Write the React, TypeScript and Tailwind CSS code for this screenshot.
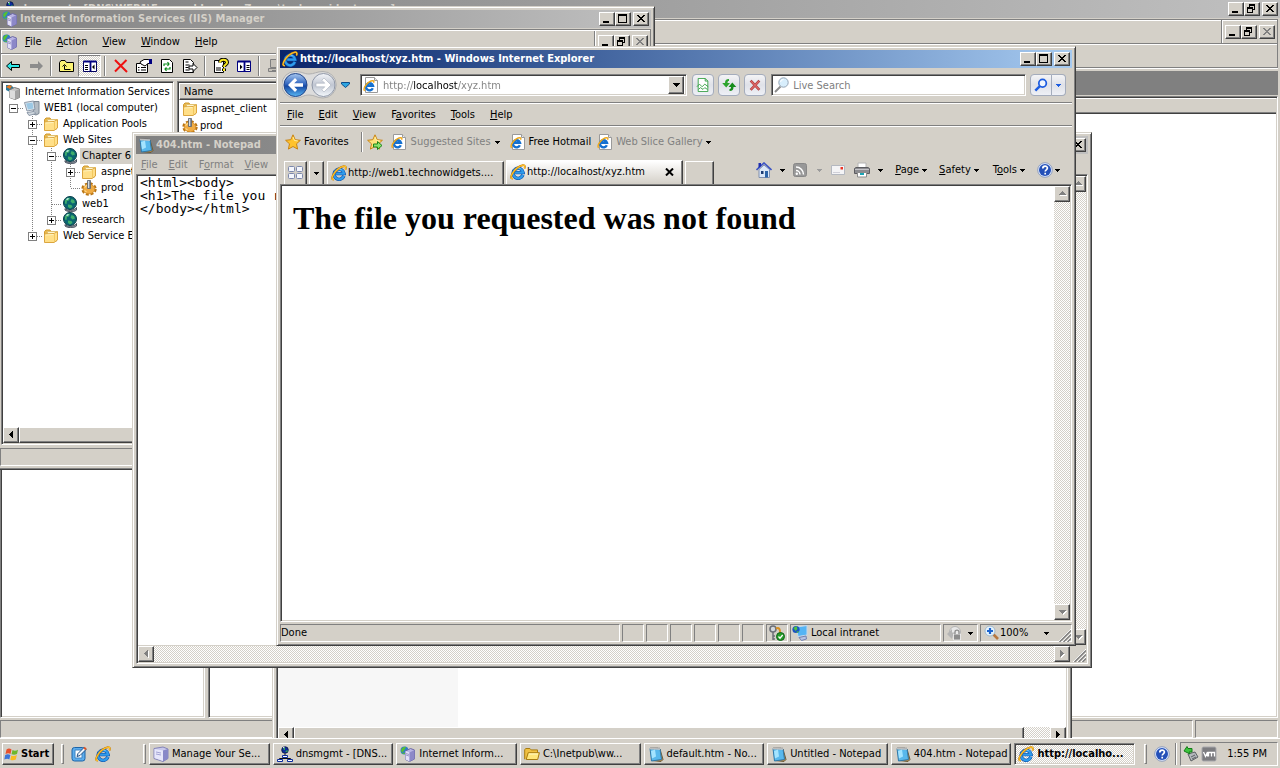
import React, { useState } from 'react';
import clsx from 'clsx';

const raised =
  'border border-t-white border-l-white border-r-[#404040] border-b-[#404040] shadow-[inset_-1px_-1px_0_#808080] bg-[#d4d0c8]';
const sunken = 'border border-t-[#808080] border-l-[#808080] border-r-white border-b-white';
const deep =
  'border border-t-[#808080] border-l-[#808080] border-r-white border-b-white shadow-[inset_1px_1px_0_#404040,inset_-1px_-1px_0_#d4d0c8]';
const band = 'border border-[#808080] shadow-[inset_1px_1px_0_#fff,0_1px_0_#fff]';
const dither = 'bg-[repeating-conic-gradient(#fff_0_25%,#d4d0c8_0_50%)] bg-[length:2px_2px]';
const mnemonic = 'underline decoration-1 underline-offset-1';

type IconProps = { children: React.ReactNode; size?: number };

function Icon({ children, size = 16 }: IconProps) {
  return (
    <svg width={size} height={size} viewBox="0 0 16 16" fill="none" className="shrink-0" aria-hidden="true">
      {children}
    </svg>
  );
}

/* ---------- icons ---------- */

function IeLogo({ size = 16 }: { size?: number }) {
  return (
    <Icon size={size}>
      <path d="M12.9 10.9A5 5 0 1 1 13.1 8.6H5.2" stroke="#0d4fa8" strokeWidth="3.4" />
      <path d="M12.9 10.9A5 5 0 1 1 13.1 8.6H5.2" stroke="#2f9cec" strokeWidth="2.2" />
      <path d="M4.2 6.5A4.6 4.6 0 0 1 10.5 4.4" stroke="#8fd4ff" strokeWidth="1" />
      <path d="M2.8 14.6C.6 14.9.4 12.6 2.6 9.2 5 5.4 9.6 1.8 12.8 1.2c2.4-.4 2.4 1.6 1.6 3.3" stroke="#c67c08" strokeWidth="1.9" />
      <path d="M2.8 14.6C.6 14.9.4 12.6 2.6 9.2 5 5.4 9.6 1.8 12.8 1.2c2.4-.4 2.4 1.6 1.6 3.3" stroke="#ffc62c" strokeWidth="1.1" />
    </Icon>
  );
}

function IePage() {
  return (
    <Icon>
      <path d="M2.5.5h9l3 3v12h-12z" fill="#fff" stroke="#9a9a9a" />
      <path d="M11.5.5v3h3" stroke="#9a9a9a" fill="#e8e8e8" />
      <path d="M9.8 11.2A3.6 3.6 0 1 1 10 8.8H4.2" stroke="#1470d0" strokeWidth="2.4" />
      <path d="M1.8 13.6C.4 13.2 1 10.6 3 8 5 5.4 8.200 3.600 10 3.700c1 .2 1 1 .6 2" stroke="#f0a818" strokeWidth="1.400" />
    </Icon>
  );
}

function FolderIcon() {
  return (
    <Icon>
      <path d="M1.500 13V3.500L3 2h4l1 1.500h5.500V13z" fill="#e8b84c" stroke="#d09a30" />
      <path d="M4.500 3.500h9v8h-9z" fill="#fff6d0" stroke="#e0c070" />
      <path d="M1.500 14.500V6l9.500-.5L14.500 3.500v8.500L11 14.500z" fill="#ffdf88" stroke="#dba640" />
      <path d="M11.500 5.500v8.500" stroke="#f2c860" />
      <path d="M2.500 7l8-.5" stroke="#fff4c0" />
    </Icon>
  );
}

function OpenFolderIcon() {
  return (
    <Icon>
      <path d="M.7 13.3V3.8l1-1.3h4.2l1.3 1.4h6.3v3" fill="#f0c040" stroke="#a87c10" />
      <path d="M2.2 13.5l2-6.8h11.2l-1.7 6.8z" fill="#ffe67a" stroke="#a87c10" />
      <path d="M5 8h9" stroke="#fff8c8" />
    </Icon>
  );
}

function GearIcon() {
  return (
    <Icon>
      <ellipse cx="8" cy="9" rx="6.300" ry="5.300" stroke="#b87414" strokeWidth="2.800" strokeDasharray="2.800 1.760" />
      <ellipse cx="8" cy="9" rx="5.800" ry="4.800" fill="#f0ac44" stroke="#d08c24" strokeWidth=".8" />
      <path d="M3.500 7.500l2.500-2.500M3.500 10.500l2 1.500" stroke="#ffd884" strokeWidth="1.200" />
      <path d="M6.500.500h3v8h-3z" fill="#8a929c" stroke="#5c6470" strokeWidth=".8" />
      <path d="M7.500 1v7" stroke="#d4dce4" />
    </Icon>
  );
}

function GlobeIcon() {
  return (
    <Icon>
      <path d="M3 12.500c2 2.500 9 2.500 11.500-1v2.500c-3 2.500-9 2-11.500 0z" fill="#8c94a0" stroke="#4c5460" />
      <circle cx="8" cy="7" r="6.500" fill="#0b6670" stroke="#063c48" />
      <path d="M3 4.500c1.500-2.500 4-3 5-2.500l-1 2.500-2 .5-.5 3-1.500-.5zM9.500 3l2.500 1 1 2.500-2.500 1-2-2zM6 8.500l3.500.5 1 2-2.500 1.500-2-1.500z" fill="#3fae6c" />
      <path d="M4.500 3.500l2-1" stroke="#d6fbff" strokeWidth="1.300" />
    </Icon>
  );
}

function IisIcon() {
  return (
    <Icon>
      <circle cx="4.500" cy="4.500" r="4" fill="#2f7cc8" />
      <path d="M1 4c1-3 4-3.500 5-3L4 4.500 2 7zM1.500 7.500l3-1 1 1.500z" fill="#58c030" />
      <path d="M5.500 5l5-2.500 4 1.500v9l-5 2.500-4-2z" fill="#b8b4e4" stroke="#6c68a4" />
      <path d="M5.500 5l4 1.500v9l-4-2z" fill="#e2e0f8" />
      <path d="M9.500 6.500l5-2.500v9l-5 2.500z" fill="#8c88c8" />
      <path d="M6 7.500l3 1M6 9l3 1" stroke="#7c78b0" strokeWidth=".7" />
    </Icon>
  );
}

function IisRootIcon() {
  return (
    <Icon>
      <path d="M1 1h5l3 3-4 4-4-2z" fill="#2a7a9c" />
      <path d="M1 3l3-2 3 1-2 3zM3 6l3-1" fill="#e87820" />
      <path d="M4.500 6l5-2.500 5 1.500v8.500l-4.500 2-5.500-2z" fill="#c4c4c4" stroke="#7c7c7c" />
      <path d="M10 7l4.500-2v8.500L10 15.500z" fill="#a2a2a2" />
      <path d="M4.500 6L10 7v8.500l-5.500-2z" fill="#dcdcdc" />
    </Icon>
  );
}

function ComputerIcon() {
  return (
    <Icon>
      <path d="M10 1.500h5v12l-3 1.500-3-1z" fill="#b4bcc4" stroke="#7c8894" />
      <path d="M.500 2.500l9-1.500 1.500 8.500-8 1.500z" fill="#dfe7ee" stroke="#8c98a8" />
      <path d="M2 3.500l6.500-1 1 6-5.500 1z" fill="#9cc8e4" />
      <path d="M3 12.500l7-1 2 2-7 2z" fill="#d0d8de" stroke="#8c98a8" />
    </Icon>
  );
}

function ServerIcon() {
  return (
    <Icon>
      <path d="M1 2.500l9-1.500 5 2v9.500l-5 3-9-3z" fill="#c8c8ec" stroke="#8484b8" />
      <path d="M10 4.500l5-1.500v9.500l-5 3z" fill="#8888c8" />
      <path d="M1.500 3l8.500 1.500v10.500l-8.500-3z" fill="#e6e6fa" />
      <path d="M3 6l5 1M3 8l5 1" stroke="#a4a4d4" />
    </Icon>
  );
}

function NotepadIcon() {
  return (
    <Icon>
      <path d="M12 3l3 10.500-2 2-9-1z" fill="#b88848" stroke="#6c5c38" />
      <path d="M2 2.500l10 .5 1.500 10.500-10 1.500z" fill="#58b8ec" stroke="#3078a8" />
      <path d="M3 5l4-1.500 1 7-4 2z" fill="#a4e4ff" />
      <path d="M2 2.500l10 .5" stroke="#f4f4f4" strokeWidth="1.600" />
      <path d="M3 1v2.500M5 1v2.500M7 1v2.500M9 1v2.500M11 1.500V3.500" stroke="#6c6c6c" strokeWidth=".8" />
    </Icon>
  );
}

function DnsIcon() {
  return (
    <Icon>
      <circle cx="8" cy="4" r="3.300" fill="#0c2c9c" stroke="#061440" strokeWidth=".8" />
      <path d="M6 3l2-1.500L8 4zM8 5.500L10.500 4v2z" fill="#38c048" />
      <path d="M6 1.800l1.500-.6" stroke="#e8f4ff" />
      <path d="M8 7.500v2M2.500 13.500v-1h11v1" stroke="#101010" />
      <path d="M5.500 9.500h5v2h-5z" fill="#fff" stroke="#0c2c9c" />
      <path d="M.500 13.500h5v2h-5zM10.500 13.500h5v2h-5z" fill="#fff" stroke="#0c2c9c" />
    </Icon>
  );
}

function StarIcon({ add = false }: { add?: boolean }) {
  return (
    <Icon>
      <path d="M8 .800l2.200 4.900 5.200.6-3.900 3.500 1.100 5.300L8 12.500l-4.600 2.600 1.100-5.300L.600 6.300l5.200-.6z" fill={add ? '#ffe27c' : '#ffc32e'} stroke="#c98414" />
      <path d="M8 3l1.400 3.500 3.400.4" stroke="#fff0a0" />
      {add && <path d="M6.500 10h4V7.500l4.500 4-4.500 4V13h-4z" fill="#8ce46c" stroke="#1d8418" />}
    </Icon>
  );
}

function HelpIcon() {
  return (
    <Icon>
      <circle cx="8" cy="8" r="7.300" fill="#dce8ff" stroke="#8090b4" strokeWidth=".8" />
      <circle cx="8" cy="8" r="6" fill="#2450b8" />
      <path d="M5.800 6.400c0-3 4.600-3 4.600-.3 0 1.700-2.200 1.700-2.200 3.400M8.200 10.800v1.600" stroke="#fff" strokeWidth="1.700" />
    </Icon>
  );
}

function Caret({ color = '#000' }: { color?: string }) {
  return (
    <svg width="5" height="3" viewBox="0 0 5 3" className="shrink-0" shapeRendering="crispEdges" aria-hidden="true">
      <path d="M0 0h5v1H4v1H3v1H2V2H1V1H0z" fill={color} />
    </svg>
  );
}

/* ---------- window chrome ---------- */

type Glyph = 'min' | 'max' | 'restore' | 'close';

function CaptionButton({ kind, disabled = false }: { kind: Glyph; disabled?: boolean }) {
  const color = disabled ? '#808080' : '#000';
  return (
    <button type="button" aria-label={kind} disabled={disabled} className={clsx('h-3.5 w-4 shrink-0', raised)}>
      <svg width="14" height="12" viewBox="0 0 14 12" shapeRendering="crispEdges" fill="none" aria-hidden="true">
        {kind === 'min' && <path d="M3 8h6v2H3z" fill={color} />}
        {kind === 'max' && <path d="M2 1h9v9H2zM3 3v6h7V3z" fill={color} fillRule="evenodd" />}
        {kind === 'restore' && (
          <path d="M4 1h6v6H8V6h1V3H5v1H4zM2 4h6v6H2zM3 6v3h4V6z" fill={color} fillRule="evenodd" />
        )}
        {kind === 'close' && (
          <path
            d="M3 2h2v1h1v1h2V3h1V2h2v1h-1v1H9v1H8v1h1v1h1v1h1v1H9V8H8V7H6v1H5v1H3V8h1V7h1V6h1V5H5V4H4V3H3z"
            fill={color}
          />
        )}
      </svg>
    </button>
  );
}

function CaptionButtons({ middle = 'max', closeOff = false }: { middle?: Glyph; closeOff?: boolean }) {
  return (
    <div className="ml-auto flex items-center pr-0.5">
      <CaptionButton kind="min" />
      <CaptionButton kind={middle} />
      <div className="w-0.5" />
      <CaptionButton kind="close" disabled={closeOff} />
    </div>
  );
}

type TitleProps = { icon: React.ReactNode; title: string; active?: boolean; middle?: Glyph };

function TitleBar({ icon, title, active = false, middle }: TitleProps) {
  return (
    <div
      className={clsx(
        'flex h-[18px] shrink-0 items-center bg-linear-to-r pl-0.5 font-bold',
        active ? 'from-[#0a246a] to-[#a6caf0] text-white' : 'from-[#808080] to-[#c0c0c0] text-[#d4d0c8]'
      )}
    >
      {icon}
      <span className="ml-0.5 whitespace-nowrap">{title}</span>
      <CaptionButtons middle={middle} />
    </div>
  );
}

function MenuItem({ label, at = 0 }: { label: string; at?: number }) {
  return (
    <button type="button" className="leading-4 whitespace-nowrap">
      {label.slice(0, at)}
      <span className={mnemonic}>{label[at]}</span>
      {label.slice(at + 1)}
    </button>
  );
}

function Window({ className, children }: { className: string; children: React.ReactNode }) {
  return (
    <section
      className={clsx(
        'absolute flex flex-col border border-t-[#d4d0c8] border-r-[#404040] border-b-[#404040] border-l-[#d4d0c8] bg-[#d4d0c8] p-[3px] shadow-[inset_1px_1px_0_#fff,inset_-1px_-1px_0_#808080]',
        className
      )}
    >
      {children}
    </section>
  );
}

const arrows = {
  up: 'M4 8h7v-1h-1v-1h-1v-1h-1v-1h-1v1h-1v1h-1v1h-1z',
  down: 'M4 5h7v1h-1v1h-1v1h-1v1h-1v-1h-1v-1h-1v-1h-1z',
  left: 'M8 3h1v7h-1v-1h-1v-1h-1v-1h-1v-1h1v-1h1v-1h1z',
  right: 'M5 3h1v1h1v1h1v1h1v1h-1v1h-1v1h-1v1h-1z',
};

function ScrollButton({ dir, enabled = false }: { dir: keyof typeof arrows; enabled?: boolean }) {
  return (
    <button type="button" aria-label={`Scroll ${dir}`} disabled={!enabled} className={clsx('size-4 shrink-0', raised)}>
      <svg width="14" height="14" viewBox="0 0 14 14" shapeRendering="crispEdges" aria-hidden="true">
        {!enabled && <path d={arrows[dir]} fill="#fff" transform="translate(1 1)" />}
        <path d={arrows[dir]} fill={enabled ? '#000' : '#808080'} />
      </svg>
    </button>
  );
}

function VScroll() {
  return (
    <div className={clsx('flex w-4 shrink-0 flex-col justify-between', dither)}>
      <ScrollButton dir="up" />
      <ScrollButton dir="down" />
    </div>
  );
}

function HScroll({ thumb }: { thumb?: string }) {
  return (
    <div className={clsx('flex h-4 shrink-0 justify-between', dither)}>
      <ScrollButton dir="left" enabled={!!thumb} />
      {thumb && <div className={clsx(raised, thumb)} />}
      <ScrollButton dir="right" enabled={!!thumb} />
    </div>
  );
}

function Grip() {
  return (
    <svg width="13" height="13" viewBox="0 0 13 13" className="shrink-0 self-end" aria-hidden="true">
      <path d="M0 13L13 0M4 13l9-9M8 13l5-5" stroke="#fff" />
      <path d="M1.500 13L13 1.500M5.500 13L13 5.500M9.500 13L13 9.500" stroke="#808080" strokeWidth="1.500" />
    </svg>
  );
}

/* ---------- DNS console, maximised at the back ---------- */

function DnsWindow() {
  return (
    <section className="absolute inset-0 flex flex-col bg-[#d4d0c8]">
      <TitleBar
        icon={<DnsIcon />}
        title="dnsmgmt - [DNS\WEB1\Forward Lookup Zones\technowidgets.com]"
        middle="restore"
      />
      <div className="flex min-h-0 flex-1 flex-col pr-0.5">
        <div className={clsx('mt-px flex h-[25px] shrink-0 items-center', band)}>
          <div className="ml-auto flex h-full items-center border-l border-[#808080] pl-[3px] shadow-[inset_1px_0_0_#fff]">
            <CaptionButtons middle="restore" closeOff />
          </div>
        </div>
        <div className={clsx('h-6 shrink-0 border-t-0', band)} />
        <div className="mt-[3px] flex min-h-0 flex-1 gap-[3px]">
          <div className={clsx('w-[205px] shrink-0 bg-white', deep)} />
          <div className="flex min-w-0 flex-1 flex-col">
            <div className="h-6 shrink-0 bg-[#808080]" />
            <div className={clsx('mt-px flex min-h-0 flex-1 flex-col bg-white p-px', deep)}>
              <div className="h-4 shrink-0 border-b border-[#404040] bg-[#d4d0c8] shadow-[inset_0_1px_0_#fff,inset_0_-1px_0_#808080]" />
            </div>
          </div>
        </div>
        <div className="mt-0.5 flex h-[18px] shrink-0 gap-0.5">
          <div className={clsx('flex-1', sunken)} />
          <div className={clsx('w-[83px]', sunken)} />
        </div>
      </div>
    </section>
  );
}

/* ---------- IIS manager ---------- */

type Node = {
  label: string;
  icon: React.ReactNode;
  guides: boolean[];
  box?: '+' | '-';
  up?: boolean;
  down?: boolean;
  selected?: boolean;
};

const nodes: Node[] = [
  { label: 'WEB1 (local computer)', icon: <ComputerIcon />, guides: [], box: '-' },
  { label: 'Application Pools', icon: <FolderIcon />, guides: [false], box: '+', up: true, down: true },
  { label: 'Web Sites', icon: <FolderIcon />, guides: [false], box: '-', up: true, down: true },
  { label: 'Chapter 6', icon: <GlobeIcon />, guides: [false, true], box: '-', up: true, down: true, selected: true },
  { label: 'aspnet_client', icon: <FolderIcon />, guides: [false, true, true], box: '+', up: true, down: true },
  { label: 'prod', icon: <GearIcon />, guides: [false, true, true], up: true },
  { label: 'web1', icon: <GlobeIcon />, guides: [false, true], up: true, down: true },
  { label: 'research', icon: <GlobeIcon />, guides: [false, true], box: '+', up: true },
  { label: 'Web Service Extensions', icon: <FolderIcon />, guides: [false], box: '+', up: true },
];

function TreeCell({ line, box, up, down, branch }: { line?: boolean; box?: string; up?: boolean; down?: boolean; branch?: boolean }) {
  return (
    <svg width="19" height="16" viewBox="0 0 19 16" shapeRendering="crispEdges" className="shrink-0" aria-hidden="true">
      <g stroke="#808080" strokeDasharray="1 1">
        {(line || up) && <path d="M8.500 0v8" />}
        {(line || down) && <path d="M8.500 8v8" />}
        {branch && <path d="M9 8.500h10" />}
      </g>
      {box && (
        <>
          <path d="M4.500 4.500h8v8h-8z" fill="#fff" stroke="#808080" />
          <path d={box === '+' ? 'M6 8.500h5M8.500 6v5' : 'M6 8.500h5'} stroke="#000" />
        </>
      )}
    </svg>
  );
}

function TreeView() {
  return (
    <ul className="flex-1 overflow-hidden pt-px">
      <li className="flex h-4 items-center pl-0.5 whitespace-nowrap">
        <IisRootIcon />
        <span className="ml-1">Internet Information Services</span>
      </li>
      {nodes.map((n) => (
        <li key={n.label} className="flex h-4 items-center pl-0.5 whitespace-nowrap">
          {n.guides.map((g, i) => (
            <TreeCell key={i} line={g} />
          ))}
          <TreeCell box={n.box} up={n.up} down={n.down} branch />
          {n.icon}
          <span className={clsx('ml-0.5 px-0.5', n.selected && 'bg-[#d4d0c8]')}>{n.label}</span>
        </li>
      ))}
    </ul>
  );
}

function Sep() {
  return <div className="mx-[3px] h-5 w-0.5 shrink-0 border-l border-[#808080] bg-white" />;
}

function IisToolbar() {
  const btn = 'flex h-[22px] w-[23px] shrink-0 items-center justify-center';
  return (
    <div className={clsx('flex h-6 shrink-0 items-center overflow-hidden border-t-0', band)}>
      <button type="button" aria-label="Back" className={btn}>
        <Icon><path d="M1.500 8l5-4.500V6.500h8v3h-8v3z" fill="#2ce8e8" stroke="#000" /></Icon>
      </button>
      <button type="button" aria-label="Forward" className={btn}>
        <Icon><path d="M15 8l-5-5v3H2v4h8v3z" fill="#8c8c8c" /></Icon>
      </button>
      <Sep />
      <button type="button" aria-label="Up" className={btn}>
        <Icon>
          <path d="M.500 13.500v-9l1.500-2h4l1.500 2h7v9z" fill="#fcf474" stroke="#000" />
          <path d="M5.500 11.500h6M5.500 11.500v-4M3.500 8.500l2-2 2 2" stroke="#000" />
        </Icon>
      </button>
      <button type="button" aria-label="Show tree" className={clsx(btn, sunken, dither)}>
        <Icon>
          <path d="M1.500 3.500h13v10h-13z" fill="#fff" stroke="#000060" />
          <path d="M1.500 3.500h13M8.500 4v9" stroke="#000080" strokeWidth="1.800" />
          <path d="M3 7.500h3M3 9.500h3M3 11.500h3" stroke="#000" />
          <path d="M12.500 6.500v5L10 9z" fill="#000" />
        </Icon>
      </button>
      <Sep />
      <button type="button" aria-label="Delete" className={btn}>
        <Icon><path d="M2 2l12 12M13.500 2L2 13.500" stroke="#ee1010" strokeWidth="2" /></Icon>
      </button>
      <button type="button" aria-label="Properties" className={btn}>
        <Icon>
          <path d="M.500 5.500h11v9H.500z" fill="#fff" stroke="#000" />
          <path d="M2 9.500h1.500M5 9.500h5M2 12h1.500M5 12h5" stroke="#000" />
          <path d="M4 4l4-2.500h4l3.500 1v3L12 5.500 9 8 5 6z" fill="#fff" stroke="#000" />
          <path d="M13 1h3v5h-3z" fill="#000080" />
        </Icon>
      </button>
      <button type="button" aria-label="Refresh" className={btn}>
        <Icon>
          <path d="M2.500 1.500h8l3 3v10h-11z" fill="#fff" stroke="#000" />
          <path d="M5 8V6h5M8.500 4L10 6 8.500 8M11 9v2H6M7.500 9.500L6 11l1.500 2" stroke="#0c8c1c" strokeWidth="1.200" />
        </Icon>
      </button>
      <button type="button" aria-label="Export list" className={btn}>
        <Icon>
          <path d="M1.500 1.500h7l3 3v10h-10z" fill="#fff" stroke="#000" />
          <path d="M3.500 4h3M3.500 7h4M3.500 9.500h3M3.500 12h4" stroke="#000" />
          <path d="M7 8h4V5.500l4 4-4 4V11H7z" fill="#fff" stroke="#000" />
        </Icon>
      </button>
      <Sep />
      <button type="button" aria-label="Help" className={btn}>
        <Icon>
          <path d="M1.500 2.500h9v12h-9z" fill="#fff" stroke="#000" />
          <path d="M3 10h5M3 12h5" stroke="#000" />
          <path d="M7 4.500c0-4 7-3.500 7 0 0 2-3 2-3 4.500M11 10.500v2.500" stroke="#000" strokeWidth="4" />
          <path d="M7 4.500c0-4 7-3.500 7 0 0 2-3 2-3 4.500M11 10.500v2.500" stroke="#f8e820" strokeWidth="2" />
        </Icon>
      </button>
      <button type="button" aria-label="Action pane" className={btn}>
        <Icon>
          <path d="M1.500 3.500h13v10h-13z" fill="#fff" stroke="#000080" />
          <path d="M1.500 3.500h13M8.500 4v9" stroke="#000080" strokeWidth="1.800" />
          <path d="M4 6.500v5L6.500 9z" fill="#000" />
          <path d="M10.500 7.500h3M10.500 9.500h3M10.500 11.500h3" stroke="#000" />
        </Icon>
      </button>
      <Sep />
      <button type="button" aria-label="Connect" className={btn}>
        <Icon>
          <path d="M3.500 1.500h10v8h-10zM5 12.500h8M1.500 10.500h12v3h-12z" stroke="#808080" fill="#c4c0b8" />
        </Icon>
      </button>
    </div>
  );
}

function IisWindow() {
  return (
    <Window className="top-1.5 -left-1 h-[464px] w-[659px]">
      <TitleBar icon={<IisIcon />} title="Internet Information Services (IIS) Manager" />
      <div className={clsx('mt-px flex h-[25px] shrink-0 items-center pt-px pl-px', band)}>
        <IisIcon />
        <nav className="flex gap-[15px] pl-[7px]">
          <MenuItem label="File" />
          <MenuItem label="Action" />
          <MenuItem label="View" />
          <MenuItem label="Window" />
          <MenuItem label="Help" />
        </nav>
        <div className="ml-auto flex h-full items-center border-l border-[#808080] pl-[3px] shadow-[inset_1px_0_0_#fff]">
          <CaptionButtons middle="restore" closeOff />
        </div>
      </div>
      <IisToolbar />
      <div className="mt-[3px] flex min-h-0 flex-1 gap-[3px] pl-px">
        <div className={clsx('flex w-[173px] shrink-0 flex-col bg-white p-px', deep)}>
          <TreeView />
          <HScroll thumb="flex-1" />
        </div>
        <div className={clsx('flex min-w-0 flex-1 flex-col bg-white p-px', deep)}>
          <div className={clsx('flex h-[17px] shrink-0 items-center px-1 pt-px', raised)}>Name</div>
          <ul className="px-[3px]">
            <li className="flex h-[17px] items-center gap-[3px] pt-px">
              <FolderIcon />
              aspnet_client
            </li>
            <li className="flex h-[17px] items-center gap-0.5">
              <GearIcon />
              prod
            </li>
          </ul>
        </div>
      </div>
      <div className={clsx('mt-[3px] h-[18px] shrink-0', sunken)} />
    </Window>
  );
}

/* ---------- Notepad ---------- */

function NotepadWindow() {
  return (
    <Window className="top-[132px] left-[132px] h-[536px] w-[960px]">
      <TitleBar icon={<NotepadIcon />} title="404.htm - Notepad" />
      <nav className="flex h-5 shrink-0 items-center gap-[11px] pt-px pl-[5px] text-[#808080]">
        <MenuItem label="File" />
        <MenuItem label="Edit" />
        <MenuItem label="Format" at={1} />
        <MenuItem label="View" />
        <MenuItem label="Help" />
      </nav>
      <div className={clsx('flex min-h-0 flex-1 flex-col bg-[#d4d0c8] p-px', deep)}>
        <div className="flex min-h-0 flex-1">
          <textarea
            aria-label="Text"
            wrap="off"
            spellCheck={false}
            defaultValue={'<html><body>\n<h1>The file you requested was not found</h1>\n</body></html>'}
            className="min-w-0 flex-1 resize-none overflow-hidden bg-white px-0.5 font-['DejaVu_Sans_Mono','Liberation_Mono',monospace] text-[13px] leading-[13px] outline-none"
          />
          <VScroll />
        </div>
        <div className="flex h-[17px] shrink-0 pt-px">
          <div className="flex-1">
            <HScroll />
          </div>
          <div className="flex w-4 justify-end">
            <Grip />
          </div>
        </div>
      </div>
    </Window>
  );
}

/* ---------- second browser window, mostly hidden ---------- */

function BackBrowserWindow() {
  return (
    <Window className="top-[300px] left-[272px] h-[449px] w-[800px]">
      <div className={clsx('flex min-h-0 flex-1 flex-col bg-white p-px', deep)}>
        <div className="flex min-h-0 flex-1">
          <div className="w-[180px] bg-[#f7f7f7]" />
        </div>
        <HScroll thumb="mr-[26px] flex-1" />
      </div>
    </Window>
  );
}

/* ---------- Internet Explorer ---------- */

const glossy = 'flex h-[22px] items-center justify-center border border-[#a4acbc] bg-linear-to-b from-[#f4f4f6] via-[#dfe1e8] to-[#eef0f6]';

function NavRow() {
  const [query, setQuery] = useState('');
  return (
    <div className="flex h-[34px] shrink-0 items-center pr-1.5 pl-0.5">
      <svg width="56" height="30" viewBox="0 0 56 30" className="shrink-0" aria-label="Back and forward" role="img">
        <defs>
          <linearGradient id="back" x1="0" y1="0" x2="0" y2="1">
            <stop offset="0" stopColor="#a8c8f0" />
            <stop offset=".45" stopColor="#3468c0" />
            <stop offset=".55" stopColor="#1548a4" />
            <stop offset="1" stopColor="#58b8f4" />
          </linearGradient>
          <linearGradient id="fwd" x1="0" y1="0" x2="0" y2="1">
            <stop offset="0" stopColor="#f4f6fa" />
            <stop offset=".5" stopColor="#c0c6d2" />
            <stop offset="1" stopColor="#f4f8fc" />
          </linearGradient>
        </defs>
        <path d="M13 1.500C20 1.500 22 4 27 4s8-2.500 14-2.500a13.200 13.200 0 0 1 0 26.500c-6 0-8-3-14-3s-7 3-14 3A13.200 13.200 0 0 1 13 1.500z" fill="#dcdcdc" stroke="#b0b0b0" />
        <circle cx="13.500" cy="15" r="11.500" fill="url(#back)" stroke="#24488c" />
        <circle cx="41.500" cy="15" r="11.500" fill="url(#fwd)" stroke="#9098a8" />
        <path d="M6 15l7-7 2.200 2.200-3 3H21v3.600h-8.800l3 3L13 22z" fill="#fff" />
        <path d="M49 15l-7-7-2.200 2.200 3 3H34v3.600h8.800l-3 3L42 22z" fill="#fff" stroke="#a8b0bc" strokeWidth=".6" />
      </svg>
      <svg width="9" height="6" viewBox="0 0 9 6" className="mr-2.5 ml-[3px] shrink-0" aria-hidden="true">
        <path d="M.500.500h8v1.500L4.500 5.500.500 2z" fill="#2ca4e0" stroke="#0c4c8c" />
      </svg>
      <div className={clsx('flex h-[22px] min-w-0 flex-[328] items-center bg-white p-0.5', deep)}>
        <IePage />
        <input
          aria-label="Address"
          defaultValue="http://localhost/xyz.htm"
          className="ml-1 min-w-0 flex-1 bg-[linear-gradient(90deg,#808080_30px,#000_30px,#000_75px,#808080_75px)] bg-clip-text pt-0.5 text-transparent outline-none"
        />
        <button type="button" aria-label="Show addresses" className={clsx('flex h-[18px] w-4 items-center justify-center', raised)}>
          <svg width="7" height="4" viewBox="0 0 7 4" shapeRendering="crispEdges" aria-hidden="true">
            <path d="M0 0h7v1H6v1H5v1H4v1H3V3H2V2H1V1H0z" fill="#000" />
          </svg>
        </button>
      </div>
      <div className="mr-[5px] ml-[5px] flex gap-1">
        <button type="button" aria-label="Compatibility view" className={clsx('w-[22px] rounded-sm', glossy)}>
          <Icon size={14}>
            <path d="M2.500.500h8l3 3v12h-11z" fill="#fff" stroke="#2c9c3c" />
            <path d="M1 10l3-3 3 3 3-3 4 3M3 13l2-2 3 2 2-2 3 2M10.500.500v3h3" stroke="#2c9c3c" />
          </Icon>
        </button>
        <button type="button" aria-label="Refresh" className={clsx('w-[22px] rounded-sm', glossy)}>
          <Icon>
            <path d="M8 2C5 2 4 3.500 4 6H1.200l4 4.500L9 6H6.500c0-1.500.5-2 1.500-2z" fill="#2ca42c" />
            <path d="M8.500 14c3 0 4-1.500 4-4h2.800l-4-4.500L7.500 10H10c0 1.500-.5 2-1.500 2z" fill="#168c1c" />
          </Icon>
        </button>
        <button type="button" aria-label="Stop" className={clsx('w-[22px] rounded-sm', glossy)}>
          <Icon size={14}>
            <path d="M3 3l10 10.500M13 3L3 13.500" stroke="#b04040" strokeWidth="3" />
            <path d="M3.500 3.500l9 9.500M12.500 3.500l-9 9.500" stroke="#e06868" strokeWidth="1.400" />
          </Icon>
        </button>
      </div>
      <div className={clsx('flex h-[22px] min-w-0 flex-[254] items-center bg-white px-0.5', deep)}>
        <Icon>
          <path d="M1 15l5.500-5.500" stroke="#8c8c8c" strokeWidth="2" />
          <circle cx="9.500" cy="5.500" r="4.700" fill="#d8eefc" stroke="#94a4b4" />
          <path d="M6.500 5a3 3 0 0 1 3-2.500" stroke="#fff" />
        </Icon>
        <input
          aria-label="Live Search"
          placeholder="Live Search"
          value={query}
          onChange={(e) => setQuery(e.target.value)}
          className="ml-[3px] min-w-0 flex-1 pt-0.5 outline-none placeholder:text-[#808080]"
        />
      </div>
      <button type="button" aria-label="Search" className={clsx('ml-1 w-[22px] rounded-l-sm', glossy)}>
        <Icon size={14}>
          <path d="M1.500 14.500L7 9" stroke="#1c5ce0" strokeWidth="2.800" />
          <circle cx="9.800" cy="6" r="4.300" stroke="#1c5ce0" strokeWidth="2" fill="#f0f6ff" />
        </Icon>
      </button>
      <button type="button" aria-label="Search options" className={clsx('w-3.5 rounded-r-sm border-l-0', glossy)}>
        <Caret color="#1c5ce0" />
      </button>
    </div>
  );
}

function FavoritesBar() {
  const link = 'flex items-center whitespace-nowrap';
  return (
    <div className="flex h-8 shrink-0 items-center pb-0.5 pl-[5px]">
      <button type="button" className={clsx(link, 'gap-[3px]')}>
        <StarIcon />
        Favorites
      </button>
      <div className="mr-1 ml-3 h-5 w-0.5 border-l border-[#808080] bg-white" />
      <button type="button" aria-label="Add to favorites">
        <StarIcon add />
      </button>
      <a href="#suggested" className={clsx(link, 'ml-2 gap-1 text-[#808080]')}>
        <IePage />
        Suggested Sites
        <Caret />
      </a>
      <a href="#hotmail" className={clsx(link, 'ml-2.5 gap-[3px]')}>
        <IePage />
        Free Hotmail
      </a>
      <a href="#webslice" className={clsx(link, 'ml-1.5 gap-[3px] text-[#808080]')}>
        <IePage />
        Web Slice Gallery
        <Caret />
      </a>
    </div>
  );
}

function TabRow() {
  const tab = 'flex items-center border border-b-0 border-t-white border-l-white border-r-[#404040] shadow-[inset_-1px_0_0_#808080]';
  const cmd = 'flex items-center whitespace-nowrap';
  return (
    <div className="flex h-[25px] shrink-0 items-end pl-1">
      <button type="button" aria-label="Quick tabs" className={clsx(tab, 'h-[23px] w-[23px] justify-center')}>
        <Icon>
          <g fill="#f4f6fc" stroke="#7c88ac">
            <rect x=".500" y="1.500" width="6" height="5" rx="1" />
            <rect x="8.500" y="1.500" width="6" height="5" rx="1" />
            <rect x=".500" y="8.500" width="6" height="5" rx="1" />
            <rect x="8.500" y="8.500" width="6" height="5" rx="1" />
          </g>
        </Icon>
      </button>
      <button type="button" aria-label="Tab list" className={clsx(tab, 'ml-0.5 h-[23px] w-[15px] justify-center')}>
        <Caret />
      </button>
      <button type="button" className={clsx(tab, 'ml-[3px] h-[23px] w-[177px] gap-px pl-[3px] text-left')}>
        <IeLogo />
        <span className="truncate">http://web1.technowidgets....</span>
      </button>
      <div className={clsx(tab, 'ml-0.5 h-6 w-[177px] bg-linear-to-b from-white to-[#d4d0c8] pr-2 pb-px pl-[3px]')}>
        <button type="button" className="flex items-center gap-px">
          <IeLogo />
          http://localhost/xyz.htm
        </button>
        <button type="button" aria-label="Close tab" className="ml-auto">
          <svg width="9" height="8" viewBox="0 0 9 8" aria-hidden="true">
            <path d="M1 .500l7 7M8 .500l-7 7" stroke="#000" strokeWidth="2" />
          </svg>
        </button>
      </div>
      <button type="button" aria-label="New tab" className={clsx(tab, 'ml-0.5 h-[23px] w-[29px]')} />
      <div className="mb-1.5 ml-auto flex items-center pr-3">
        <button type="button" aria-label="Home" className={clsx(cmd, 'gap-2')}>
          <Icon>
            <path d="M3 7.500L8 3l5.500 4.500v8H3z" fill="#dce8f8" stroke="#8090b0" />
            <path d="M.500 8L8 1l7.500 7" stroke="#3c54c4" strokeWidth="1.600" />
            <path d="M2.500 1h2.500v3L2.500 6z" fill="#1c2cb0" />
            <path d="M9 9h3v6.500H9z" fill="#2c64a8" />
            <path d="M5 9h2.500v3H5z" fill="#1c3c74" />
          </Icon>
          <Caret />
        </button>
        <button type="button" aria-label="Feeds" className={clsx(cmd, 'ml-[7px] gap-[9px]')} disabled>
          <Icon>
            <rect x="1.500" y="1.500" width="13" height="13" rx="2" fill="#989898" stroke="#888" />
            <path d="M4 8.500a4 4 0 0 1 4 4M4 5a7.500 7.500 0 0 1 7.500 7.500" stroke="#fff" strokeWidth="1.500" />
            <circle cx="4.800" cy="11.700" r="1.200" fill="#fff" />
          </Icon>
          <Caret color="#9c9c9c" />
        </button>
        <button type="button" aria-label="Read mail" className="ml-2">
          <Icon>
            <path d="M1.500 3.500h13v9h-13z" fill="#f4f4f6" stroke="#b4b8c0" />
            <path d="M10.500 5h2.500v2.500h-2.500z" fill="#ec3424" />
            <path d="M3 10.500h7" stroke="#d0d0d8" />
          </Icon>
        </button>
        <button type="button" aria-label="Print" className={clsx(cmd, 'ml-2 gap-2')}>
          <Icon>
            <path d="M4 1h8v5H4z" fill="#fff" stroke="#b4b4b4" />
            <path d="M.500 6.500l1.500-1h12l1.500 1v5H.500z" fill="#8c8c90" stroke="#5c5c60" />
            <path d="M1 7.500h14" stroke="#c4c4c8" />
            <path d="M3.500 10.500h9v4.500h-9z" fill="#fff" stroke="#8c8c8c" />
            <path d="M6 11h4v2H6z" fill="#18a4b4" />
          </Icon>
          <Caret />
        </button>
        <button type="button" className={clsx(cmd, 'ml-3 gap-[3px]')}>
          <span><span className={mnemonic}>P</span>age</span>
          <Caret />
        </button>
        <button type="button" className={clsx(cmd, 'ml-3 gap-[3px]')}>
          <span><span className={mnemonic}>S</span>afety</span>
          <Caret />
        </button>
        <button type="button" className={clsx(cmd, 'ml-3.5 gap-[3px]')}>
          <span>T<span className={mnemonic}>o</span>ols</span>
          <Caret />
        </button>
        <button type="button" aria-label="Help" className={clsx(cmd, 'ml-3 gap-0.5')}>
          <HelpIcon />
          <Caret />
        </button>
      </div>
    </div>
  );
}

function Divider() {
  return <div className="h-0.5 shrink-0 border-t border-[#808080] bg-white" />;
}

function StatusBar() {
  const pane = clsx('flex items-center', sunken);
  return (
    <div className="mt-0.5 flex h-[18px] shrink-0 gap-0.5">
      <div className={clsx('min-w-0 flex-1', pane)}>Done</div>
      {[0, 1, 2, 3, 4, 5].map((i) => (
        <div key={i} className={clsx('w-[22px]', pane)} />
      ))}
      <div className={clsx('w-[22px] justify-center', pane)}>
        <Icon>
          <circle cx="4" cy="4" r="3" stroke="#6c7078" strokeWidth="1.600" fill="#d4d8dc" />
          <path d="M4 7v8M4 11h2M4 14h2" stroke="#6c7078" strokeWidth="1.500" />
          <path d="M7 3.500c3-1.500 4.500 1 4 5" stroke="#d89020" strokeWidth="2" />
          <circle cx="11.500" cy="11.500" r="4" fill="#249c28" stroke="#10641c" />
          <path d="M9.500 11.500l1.500 1.700 2.700-3.200" stroke="#fff" strokeWidth="1.300" />
        </Icon>
      </div>
      <div className={clsx('w-[151px] gap-[3px] pl-px', pane)}>
        <Icon>
          <path d="M4.500 2l10.500-1.500v9.500L6 11.500z" fill="#54b4f4" stroke="#c4d8ec" />
          <path d="M7 12.500l7-1.500.5 3-5 1.500z" fill="#b8c4e4" stroke="#7080b0" />
          <circle cx="4" cy="4.500" r="3.600" fill="#1c54c0" />
          <path d="M1.500 3l3-2 1 3-2 2zM4 7l3-1-1 2z" fill="#50c440" />
        </Icon>
        Local intranet
      </div>
      <div className={clsx('w-[35px] justify-between pr-1 pl-0.5', pane)}>
        <Icon>
          <circle cx="9" cy="7" r="5.500" fill="#e8e8e8" stroke="#b4b4b4" />
          <path d="M1 9l5-5v3.500h3v4H6V14z" fill="#b4b4b4" />
          <path d="M7.500 9h7v6h-7z" fill="#8c8c8c" stroke="#f4f4f4" strokeWidth=".8" />
          <path d="M9 9V7c0-2.500 4-2.500 4 0v2" stroke="#8c8c8c" strokeWidth="1.300" />
        </Icon>
        <Caret />
      </div>
      <button type="button" className={clsx('w-[92px] pl-[3px]', pane)}>
        <Icon>
          <path d="M9 9l5 5" stroke="#b87840" strokeWidth="2.600" />
          <circle cx="6" cy="6" r="5" fill="#e4f2fc" stroke="#a0b8cc" />
          <path d="M3 6h6M6 3v6" stroke="#1c64d0" strokeWidth="2.200" />
        </Icon>
        100%
        <span className="ml-4"><Caret /></span>
        <span className="mt-1 ml-auto"><Grip /></span>
      </button>
    </div>
  );
}

function BrowserWindow() {
  return (
    <Window className="top-[46px] left-[276px] h-[600px] w-[800px]">
      <TitleBar icon={<IeLogo />} title="http://localhost/xyz.htm - Windows Internet Explorer" active />
      <NavRow />
      <Divider />
      <nav className="flex h-[21px] shrink-0 items-center gap-[15px] pl-[7px]">
        <MenuItem label="File" />
        <MenuItem label="Edit" />
        <MenuItem label="View" />
        <MenuItem label="Favorites" at={1} />
        <MenuItem label="Tools" />
        <MenuItem label="Help" />
      </nav>
      <Divider />
      <FavoritesBar />
      <TabRow />
      <main className={clsx('flex min-h-0 flex-1 bg-white p-px', deep)}>
        <div className="flex-1 px-[11px] py-3.5">
          <h1 className="font-['Liberation_Serif',serif] text-[32px] leading-9 font-bold whitespace-nowrap">
            The file you requested was not found
          </h1>
        </div>
        <VScroll />
      </main>
      <StatusBar />
    </Window>
  );
}

/* ---------- taskbar ---------- */

const tasks = [
  { label: 'Manage Your Se...', icon: <ServerIcon /> },
  { label: 'dnsmgmt - [DNS...', icon: <DnsIcon /> },
  { label: 'Internet Inform...', icon: <IisIcon /> },
  { label: 'C:\\Inetpub\\ww...', icon: <OpenFolderIcon /> },
  { label: 'default.htm - No...', icon: <NotepadIcon /> },
  { label: 'Untitled - Notepad', icon: <NotepadIcon /> },
  { label: '404.htm - Notepad', icon: <NotepadIcon /> },
  { label: 'http://localho...', icon: <IeLogo />, active: true },
];

function BarHandle() {
  return <div className="h-5 w-[3px] shrink-0 border border-t-white border-r-[#808080] border-b-[#808080] border-l-white" />;
}

function Taskbar() {
  return (
    <footer className="flex h-[30px] shrink-0 items-center border-t border-white bg-[#d4d0c8] pr-0.5 pl-0.5">
      <button type="button" className={clsx('flex h-[22px] w-[52px] shrink-0 items-center gap-px pl-px font-bold', raised)}>
        <Icon>
          <path d="M2.500 3.500c2-1.500 3.500-1 5 0L6.500 8C5 7 3.500 7 1.500 8z" fill="#e8502c" />
          <path d="M8.500 4c2 1 3.500.8 5.500-.3L13 8c-2 1-3.500 1-5.500.3z" fill="#6cb82c" />
          <path d="M1.200 9c2-1.200 3.500-1 5.200 0l-1.100 4.500C4 12.500 2.500 12.500.300 13.500z" fill="#3c74d8" />
          <path d="M7.300 9.500c2 .9 3.500.7 5.500-.4l-1 4.500c-2 1-3.800.9-5.500.2z" fill="#f8bc20" />
        </Icon>
        Start
      </button>
      <div className="mr-[7px] ml-[7px]"><BarHandle /></div>
      <button type="button" aria-label="Show desktop">
        <Icon>
          <rect x="1" y="1.500" width="13" height="13.500" rx="2.500" fill="#5cacec" stroke="#1c64a8" />
          <path d="M4 4h7v8H4z" fill="#fff" stroke="#3c84c4" />
          <path d="M6 10.500l1-3 6-6 2 2-6 6z" fill="#eef4fa" stroke="#1c4c84" />
          <path d="M13 1.500l2 2" stroke="#e05424" strokeWidth="2" />
        </Icon>
      </button>
      <button type="button" aria-label="Internet Explorer" className="ml-2">
        <IeLogo />
      </button>
      <div className="ml-8"><BarHandle /></div>
      <div className="mr-[9px] ml-[3px] flex min-w-0 flex-1 gap-[3px]">
        {tasks.map((t) => (
          <button
            key={t.label}
            type="button"
            className={clsx(
              'flex h-[22px] min-w-0 flex-1 items-center gap-[3px] pl-[3px]',
              t.active ? clsx(deep, dither, 'font-bold') : raised
            )}
          >
            {t.icon}
            <span className="whitespace-nowrap">{t.label}</span>
          </button>
        ))}
      </div>
      <BarHandle />
      <button type="button" aria-label="Help" className="mr-[5px] ml-[7px]">
        <HelpIcon />
      </button>
      <div className="mr-[3px] h-[22px] w-0.5 border-l border-[#808080] bg-white" />
      <div className={clsx('flex h-6 w-[98px] shrink-0 items-center pl-0.5', sunken)}>
        <Icon>
          <path d="M5 8l7-2 3 5-7 4z" fill="#b4b8bc" stroke="#5c6064" />
          <path d="M8 11l4-2M9 13l4-2" stroke="#5c6064" />
          <path d="M1 5l3-4.500 1 2h4v3.500H6l1 2z" fill="#3cc43c" stroke="#147c18" />
        </Icon>
        <svg width="16" height="16" viewBox="0 0 16 16" className="ml-0.5 shrink-0" aria-hidden="true">
          <rect x="1" y="1" width="14" height="14" rx="1.500" fill="#7c7c80" stroke="#a8a8ac" />
          <path d="M2.500 6l2 4.500 2-4.500v4.500M7.500 10.500V6.500h3v4M10.500 6.500h3v4" stroke="#fff" strokeWidth="1.300" fill="none" />
        </svg>
        <time className="ml-auto pr-2.5 whitespace-nowrap">1:55 PM</time>
      </div>
    </footer>
  );
}

export default function App() {
  return (
    <div className="flex h-screen w-full flex-col overflow-hidden bg-[#d4d0c8] font-['DejaVu_Sans_Condensed','DejaVu_Sans',sans-serif] text-[11px] leading-4 text-black">
      <div className="relative min-h-0 flex-1 overflow-hidden">
        <DnsWindow />
        <BackBrowserWindow />
        <IisWindow />
        <NotepadWindow />
        <BrowserWindow />
      </div>
      <Taskbar />
    </div>
  );
}
